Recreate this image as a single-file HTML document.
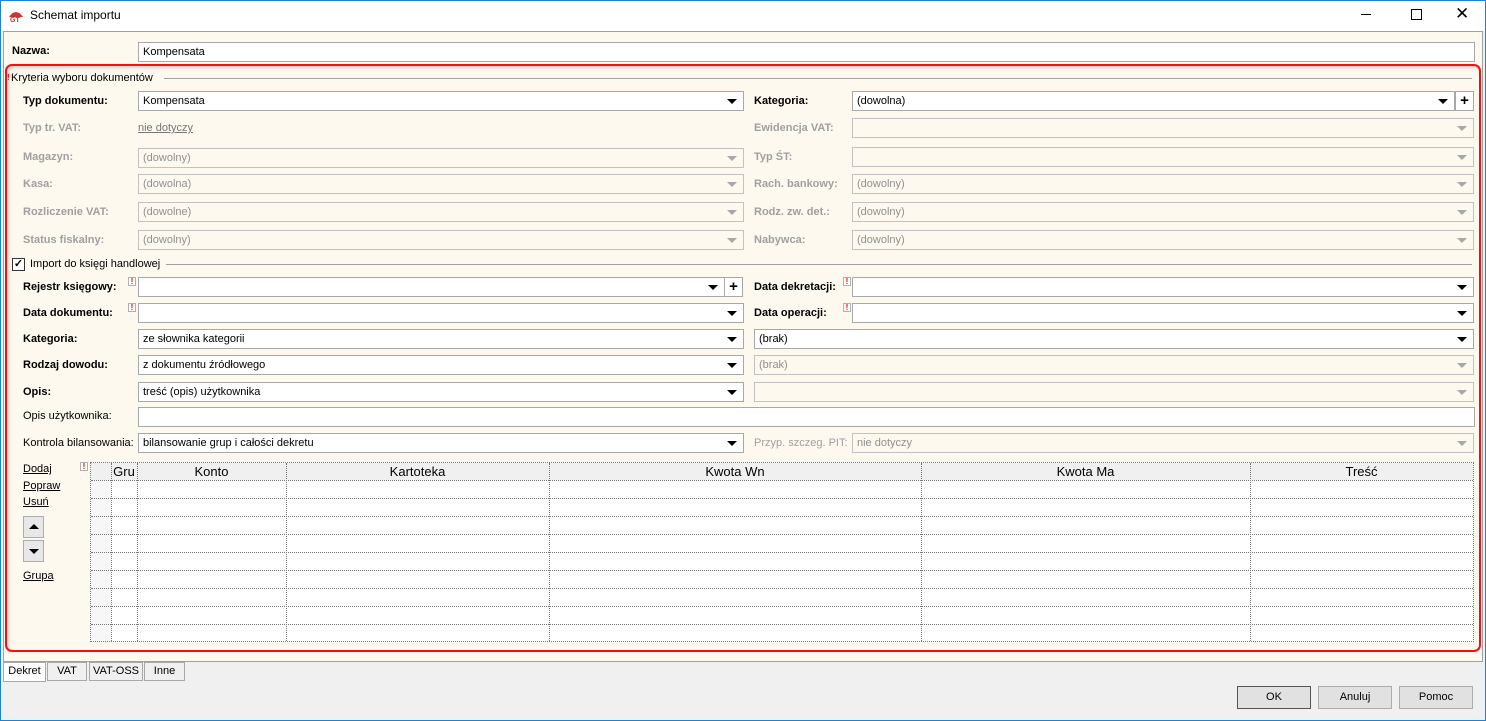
<!DOCTYPE html>
<html><head><meta charset="utf-8"><style>
*{box-sizing:border-box;margin:0;padding:0}
body{width:1486px;height:721px;overflow:hidden;background:#f0f0f0;font-family:"Liberation Sans",sans-serif;font-size:11px;color:#000;position:relative}
.a{position:absolute}
.win{left:0;top:0;width:1486px;height:721px;border:1px solid #1883d7}
.title{left:1px;top:1px;width:1484px;height:30px;background:#fff}
.panel{left:3px;top:31px;width:1480px;height:631px;background:#fdf9ef;border:1px solid #a0a0a0}
.red{left:5px;top:64px;width:1476px;height:588px;border:2px solid #f41010;border-radius:7px;box-shadow:inset 2px 2px 3px rgba(0,0,0,.15)}
.lb{font-weight:bold;font-size:11px}
.dis{color:#a0a0a0}
.in{background:#fff;border:1px solid #a8a8a8;height:20px;padding:2px 4px;font-size:11px;line-height:14px}
.in.d{background:#fdf9ef;color:#909090;border-color:#c2c2c2}
.dd{position:absolute;right:6px;top:7px;width:0;height:0;border-left:5px solid transparent;border-right:5px solid transparent;border-top:5px solid #000}
.in.d .dd{border-top-color:#a8a8a8}
.plus{background:#fff;border:1px solid #a8a8a8;height:20px;width:19px;text-align:center;font-weight:bold;font-size:15px;line-height:17px}
.ex{width:8px;height:9px;border:1px solid #b0b0b0;background:#fff;color:#e00;font-size:8px;line-height:7px;text-align:center;font-weight:bold}
.lnk{text-decoration:underline}
.sep{height:1px;background:#a0a0a0}
.tab{top:662px;height:19px;border:1px solid #a8a8a8;background:#f0f0f0;text-align:center;line-height:17px}
.btn{top:686px;height:23px;width:74px;border:1px solid #adadad;background:#e1e1e1;text-align:center;line-height:21px;font-size:11px}
.grid{left:90px;top:462px;width:1384px;height:180px;background:#fff;border:1px dotted #777}
.vl{top:0;height:178px;border-left:1px dotted #777}
.hl{left:0;width:1382px;border-top:1px dotted #777}
.hd{top:0;height:17px;text-align:center;font-size:13px;line-height:17px}
</style></head><body>
<div class="a win"></div>
<div class="a title"></div>
<svg class="a" style="left:8px;top:9px" width="16" height="14" viewBox="0 0 16 14"><path d="M1 8 Q8 -2 15 8" fill="#c33" /><text x="2" y="13" font-size="7" fill="#c33" font-weight="bold" font-family="Liberation Sans">GT</text></svg>
<div class="a" style="left:30px;top:8px;font-size:12px">Schemat importu</div>
<div class="a" style="left:1361px;top:14px;width:10px;height:1px;background:#000"></div>
<div class="a" style="left:1411px;top:9px;width:11px;height:11px;border:1px solid #000"></div>
<div class="a" style="left:1455px;top:4px;font-size:17px;font-family:'DejaVu Sans',sans-serif;font-weight:100">✕</div>
<div class="a panel"></div>

<div class="a lb" style="left:12px;top:45px">Nazwa:</div>
<div class="a in" style="left:138px;top:42px;width:1337px">Kompensata</div>
<div class="a red"></div>

<div class="a" style="left:7px;top:73px;color:#e00;font-size:8px;font-weight:bold">!</div>
<div class="a" style="left:11px;top:72px">Kryteria wyboru dokumentów</div>
<div class="a sep" style="left:164px;top:78px;width:1308px"></div>

<div class="a lb" style="left:23px;top:95px">Typ dokumentu:</div>
<div class="a in" style="left:138px;top:91px;width:606px">Kompensata<i class="dd"></i></div>
<div class="a lb" style="left:754px;top:95px">Kategoria:</div>
<div class="a in" style="left:852px;top:91px;width:603px">(dowolna)<i class="dd"></i></div>
<div class="a plus" style="left:1455px;top:91px">+</div>

<div class="a lb dis" style="left:23px;top:122px">Typ tr. VAT:</div>
<div class="a lnk dis" style="left:138px;top:122px;color:#777">nie dotyczy</div>
<div class="a lb dis" style="left:754px;top:122px">Ewidencja VAT:</div>
<div class="a in d" style="left:852px;top:118px;width:622px"><i class="dd"></i></div>

<div class="a lb dis" style="left:23px;top:151px">Magazyn:</div>
<div class="a in d" style="left:138px;top:148px;width:606px">(dowolny)<i class="dd"></i></div>
<div class="a lb dis" style="left:754px;top:151px">Typ ŚT:</div>
<div class="a in d" style="left:852px;top:147px;width:622px"><i class="dd"></i></div>

<div class="a lb dis" style="left:23px;top:178px">Kasa:</div>
<div class="a in d" style="left:138px;top:174px;width:606px">(dowolna)<i class="dd"></i></div>
<div class="a lb dis" style="left:754px;top:178px">Rach. bankowy:</div>
<div class="a in d" style="left:852px;top:174px;width:622px">(dowolny)<i class="dd"></i></div>

<div class="a lb dis" style="left:23px;top:206px">Rozliczenie VAT:</div>
<div class="a in d" style="left:138px;top:202px;width:606px">(dowolne)<i class="dd"></i></div>
<div class="a lb dis" style="left:754px;top:206px">Rodz. zw. det.:</div>
<div class="a in d" style="left:852px;top:202px;width:622px">(dowolny)<i class="dd"></i></div>

<div class="a lb dis" style="left:23px;top:234px">Status fiskalny:</div>
<div class="a in d" style="left:138px;top:230px;width:606px">(dowolny)<i class="dd"></i></div>
<div class="a lb dis" style="left:754px;top:234px">Nabywca:</div>
<div class="a in d" style="left:852px;top:230px;width:622px">(dowolny)<i class="dd"></i></div>

<div class="a" style="left:12px;top:258px;width:13px;height:13px;border:1px solid #333;background:#fff;font-size:11px;line-height:11px;text-align:center;font-weight:bold">✓</div>
<div class="a" style="left:30px;top:258px">Import do księgi handlowej</div>
<div class="a sep" style="left:166px;top:264px;width:1306px"></div>

<div class="a lb" style="left:23px;top:281px">Rejestr księgowy:</div>
<div class="a ex" style="left:128px;top:277px">!</div>
<div class="a in" style="left:138px;top:277px;width:587px"><i class="dd"></i></div>
<div class="a plus" style="left:724px;top:277px">+</div>
<div class="a lb" style="left:754px;top:281px">Data dekretacji:</div>
<div class="a ex" style="left:843px;top:277px">!</div>
<div class="a in" style="left:852px;top:277px;width:622px"><i class="dd"></i></div>

<div class="a lb" style="left:23px;top:307px">Data dokumentu:</div>
<div class="a ex" style="left:128px;top:303px">!</div>
<div class="a in" style="left:138px;top:303px;width:606px"><i class="dd"></i></div>
<div class="a lb" style="left:754px;top:307px">Data operacji:</div>
<div class="a ex" style="left:843px;top:303px">!</div>
<div class="a in" style="left:852px;top:303px;width:622px"><i class="dd"></i></div>

<div class="a lb" style="left:23px;top:333px">Kategoria:</div>
<div class="a in" style="left:138px;top:329px;width:606px">ze słownika kategorii<i class="dd"></i></div>
<div class="a in" style="left:754px;top:329px;width:720px">(brak)<i class="dd"></i></div>

<div class="a lb" style="left:23px;top:359px">Rodzaj dowodu:</div>
<div class="a in" style="left:138px;top:355px;width:606px">z dokumentu źródłowego<i class="dd"></i></div>
<div class="a in d" style="left:754px;top:355px;width:720px">(brak)<i class="dd"></i></div>

<div class="a lb" style="left:23px;top:386px">Opis:</div>
<div class="a in" style="left:138px;top:382px;width:606px">treść (opis) użytkownika<i class="dd"></i></div>
<div class="a in d" style="left:754px;top:382px;width:720px"><i class="dd"></i></div>

<div class="a" style="left:23px;top:410px">Opis użytkownika:</div>
<div class="a in" style="left:138px;top:407px;width:1337px"></div>

<div class="a" style="left:23px;top:437px">Kontrola bilansowania:</div>
<div class="a in" style="left:138px;top:433px;width:606px">bilansowanie grup i całości dekretu<i class="dd"></i></div>
<div class="a dis" style="left:754px;top:437px">Przyp. szczeg. PIT:</div>
<div class="a in d" style="left:852px;top:433px;width:622px">nie dotyczy<i class="dd"></i></div>

<div class="a lnk" style="left:23px;top:463px">Dodaj</div>
<div class="a ex" style="left:80px;top:462px">!</div>
<div class="a lnk" style="left:23px;top:480px">Popraw</div>
<div class="a lnk" style="left:23px;top:496px">Usuń</div>
<div class="a" style="left:23px;top:516px;width:21px;height:22px;border:1px solid #adadad;background:#e8e8e8"><i class="a" style="left:5px;top:7px;border-left:5px solid transparent;border-right:5px solid transparent;border-bottom:5px solid #000"></i></div>
<div class="a" style="left:23px;top:540px;width:21px;height:22px;border:1px solid #adadad;background:#e8e8e8"><i class="a" style="left:5px;top:8px;border-left:5px solid transparent;border-right:5px solid transparent;border-top:5px solid #000"></i></div>
<div class="a lnk" style="left:23px;top:570px">Grupa</div>

<div class="a grid">
<div class="a" style="left:0;top:0;width:1382px;height:17px;background:#f0f0f0"></div>
<div class="a" style="left:0;top:17px;width:20px;height:161px;background:#f7f7f7"></div>
<div class="a vl" style="left:20px"></div><div class="a vl" style="left:46px"></div><div class="a vl" style="left:195px"></div><div class="a vl" style="left:458px"></div><div class="a vl" style="left:830px"></div><div class="a vl" style="left:1159px"></div>
<div class="a hl" style="top:17px"></div><div class="a hl" style="top:35px"></div><div class="a hl" style="top:53px"></div><div class="a hl" style="top:71px"></div><div class="a hl" style="top:89px"></div><div class="a hl" style="top:107px"></div><div class="a hl" style="top:125px"></div><div class="a hl" style="top:143px"></div><div class="a hl" style="top:161px"></div>
<div class="a hd" style="left:20px;width:26px">Gru</div>
<div class="a hd" style="left:46px;width:149px">Konto</div>
<div class="a hd" style="left:195px;width:263px">Kartoteka</div>
<div class="a hd" style="left:458px;width:372px">Kwota Wn</div>
<div class="a hd" style="left:830px;width:329px">Kwota Ma</div>
<div class="a hd" style="left:1159px;width:223px">Treść</div>
</div>

<div class="a tab" style="left:3px;width:43px;background:#fff;height:20px">Dekret</div>
<div class="a tab" style="left:47px;width:40px">VAT</div>
<div class="a tab" style="left:89px;width:54px">VAT-OSS</div>
<div class="a tab" style="left:144px;width:41px">Inne</div>

<div class="a btn" style="left:1237px;border:1px solid #555">OK</div>
<div class="a btn" style="left:1318px">Anuluj</div>
<div class="a btn" style="left:1399px">Pomoc</div>
</body></html>
